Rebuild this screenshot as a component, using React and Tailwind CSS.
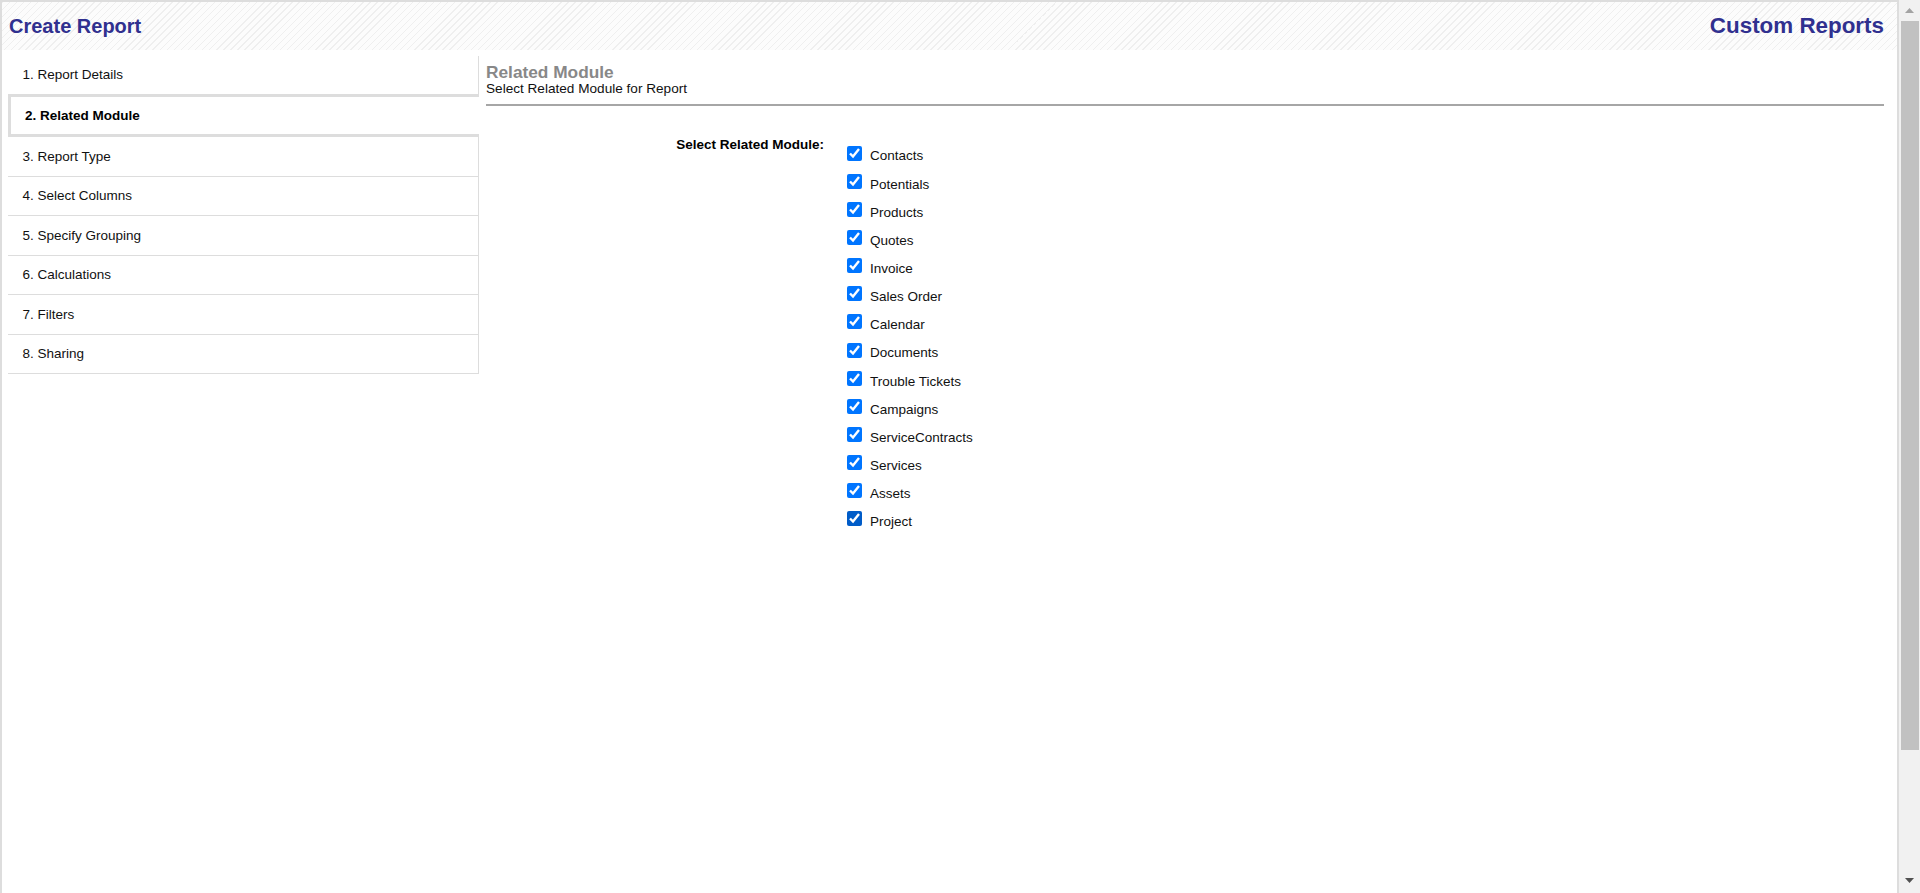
import React from "react";

const steps = [
  "1. Report Details",
  "2. Related Module",
  "3. Report Type",
  "4. Select Columns",
  "5. Specify Grouping",
  "6. Calculations",
  "7. Filters",
  "8. Sharing",
];

const modules = [
  "Contacts",
  "Potentials",
  "Products",
  "Quotes",
  "Invoice",
  "Sales Order",
  "Calendar",
  "Documents",
  "Trouble Tickets",
  "Campaigns",
  "ServiceContracts",
  "Services",
  "Assets",
  "Project",
];

function Sidebar() {
  return (
    <div className="mt-[6px] ml-[6px] flex w-[471px] shrink-0 flex-col">
      {steps.map((s, i) => {
        if (i === 1) {
          return (
            <div
              key={s}
              className="flex h-[43px] items-center border-y-[3px] border-l-[3px] border-[#dddddd] bg-white pt-[1.5px] pl-[14px] text-[13.5px] font-bold text-[#000]"
            >
              {s}
            </div>
          );
        }
        if (i === 0) {
          return (
            <div
              key={s}
              className="flex h-[38px] items-center border-r border-[#dddddd] pl-[14.5px] text-[13.5px] text-[#111]"
            >
              {s}
            </div>
          );
        }
        return (
          <div
            key={s}
            className="flex h-[39.5px] items-center border-r border-b border-[#dddddd] pt-[1px] pl-[14.5px] text-[13.5px] text-[#111]"
          >
            {s}
          </div>
        );
      })}
    </div>
  );
}

function Content() {
  return (
    <div className="ml-[7px] mr-[13px] flex flex-1 flex-col pt-[12.7px]">
      <div className="text-[17.3px] font-bold leading-[18px] text-[#888888]">
        Related Module
      </div>
      <div className="text-[13.6px] leading-[15px] text-[#111]">
        Select Related Module for Report
      </div>
      <div className="mt-[8.6px] h-[2px] bg-[#a6a6a6]" />
      <div className="mt-[30.7px] flex">
        <div className="w-[338px] text-right text-[13.5px] font-bold leading-[16px] text-[#000]">
          Select Related Module:
        </div>
        <div className="ml-[23px] flex flex-col pt-[5.4px]">
          {modules.map((m, i) => (
            <label key={m} className="flex h-[28.15px] items-center">
              <input
                type="checkbox"
                defaultChecked
                className={
                  i === modules.length - 1
                    ? "m-0 mb-[6.6px] h-[15px] w-[15px] accent-[#005cc8]"
                    : "m-0 mb-[6.6px] h-[15px] w-[15px] accent-[#0075ff]"
                }
              />
              <span className="ml-[8px] text-[13.5px] leading-[16px] text-[#111]">
                {m}
              </span>
            </label>
          ))}
        </div>
      </div>
    </div>
  );
}

function Scrollbar() {
  return (
    <div className="flex h-full w-[21px] shrink-0 flex-col bg-[#f1f1f1]">
      <div className="flex h-[21px] items-center justify-center">
        <svg width="9" height="5" viewBox="0 0 9 5">
          <polygon points="0,5 9,5 4.5,0" fill="#a3a3a3" />
        </svg>
      </div>
      <div className="mx-[1.5px] h-[729px] bg-[#c1c1c1]" />
      <div className="flex-1" />
      <div className="flex h-[21px] items-center justify-center pb-[4px]">
        <svg width="9" height="5" viewBox="0 0 9 5">
          <polygon points="0,0 9,0 4.5,5" fill="#505050" />
        </svg>
      </div>
    </div>
  );
}

export default function App() {
  return (
    <div className="flex h-[893px] w-[1920px] overflow-hidden bg-white font-['Liberation_Sans',Arial,sans-serif]">
      <div className="flex h-full flex-1 flex-col border-t-2 border-r-2 border-l-2 border-[#dddddd]">
        <div className="flex h-[48px] shrink-0 items-center justify-between bg-[image:repeating-linear-gradient(135deg,#efefef_0px,#efefef_1px,#fcfcfc_1px,#fcfcfc_5px)] pl-[7px] pr-[13px]">
          <div className="text-[20px] font-bold text-[#30308f]">Create Report</div>
          <div className="text-[22.4px] font-bold text-[#30308f]">Custom Reports</div>
        </div>
        <div className="flex flex-1 items-start">
          <Sidebar />
          <Content />
        </div>
      </div>
      <Scrollbar />
    </div>
  );
}
